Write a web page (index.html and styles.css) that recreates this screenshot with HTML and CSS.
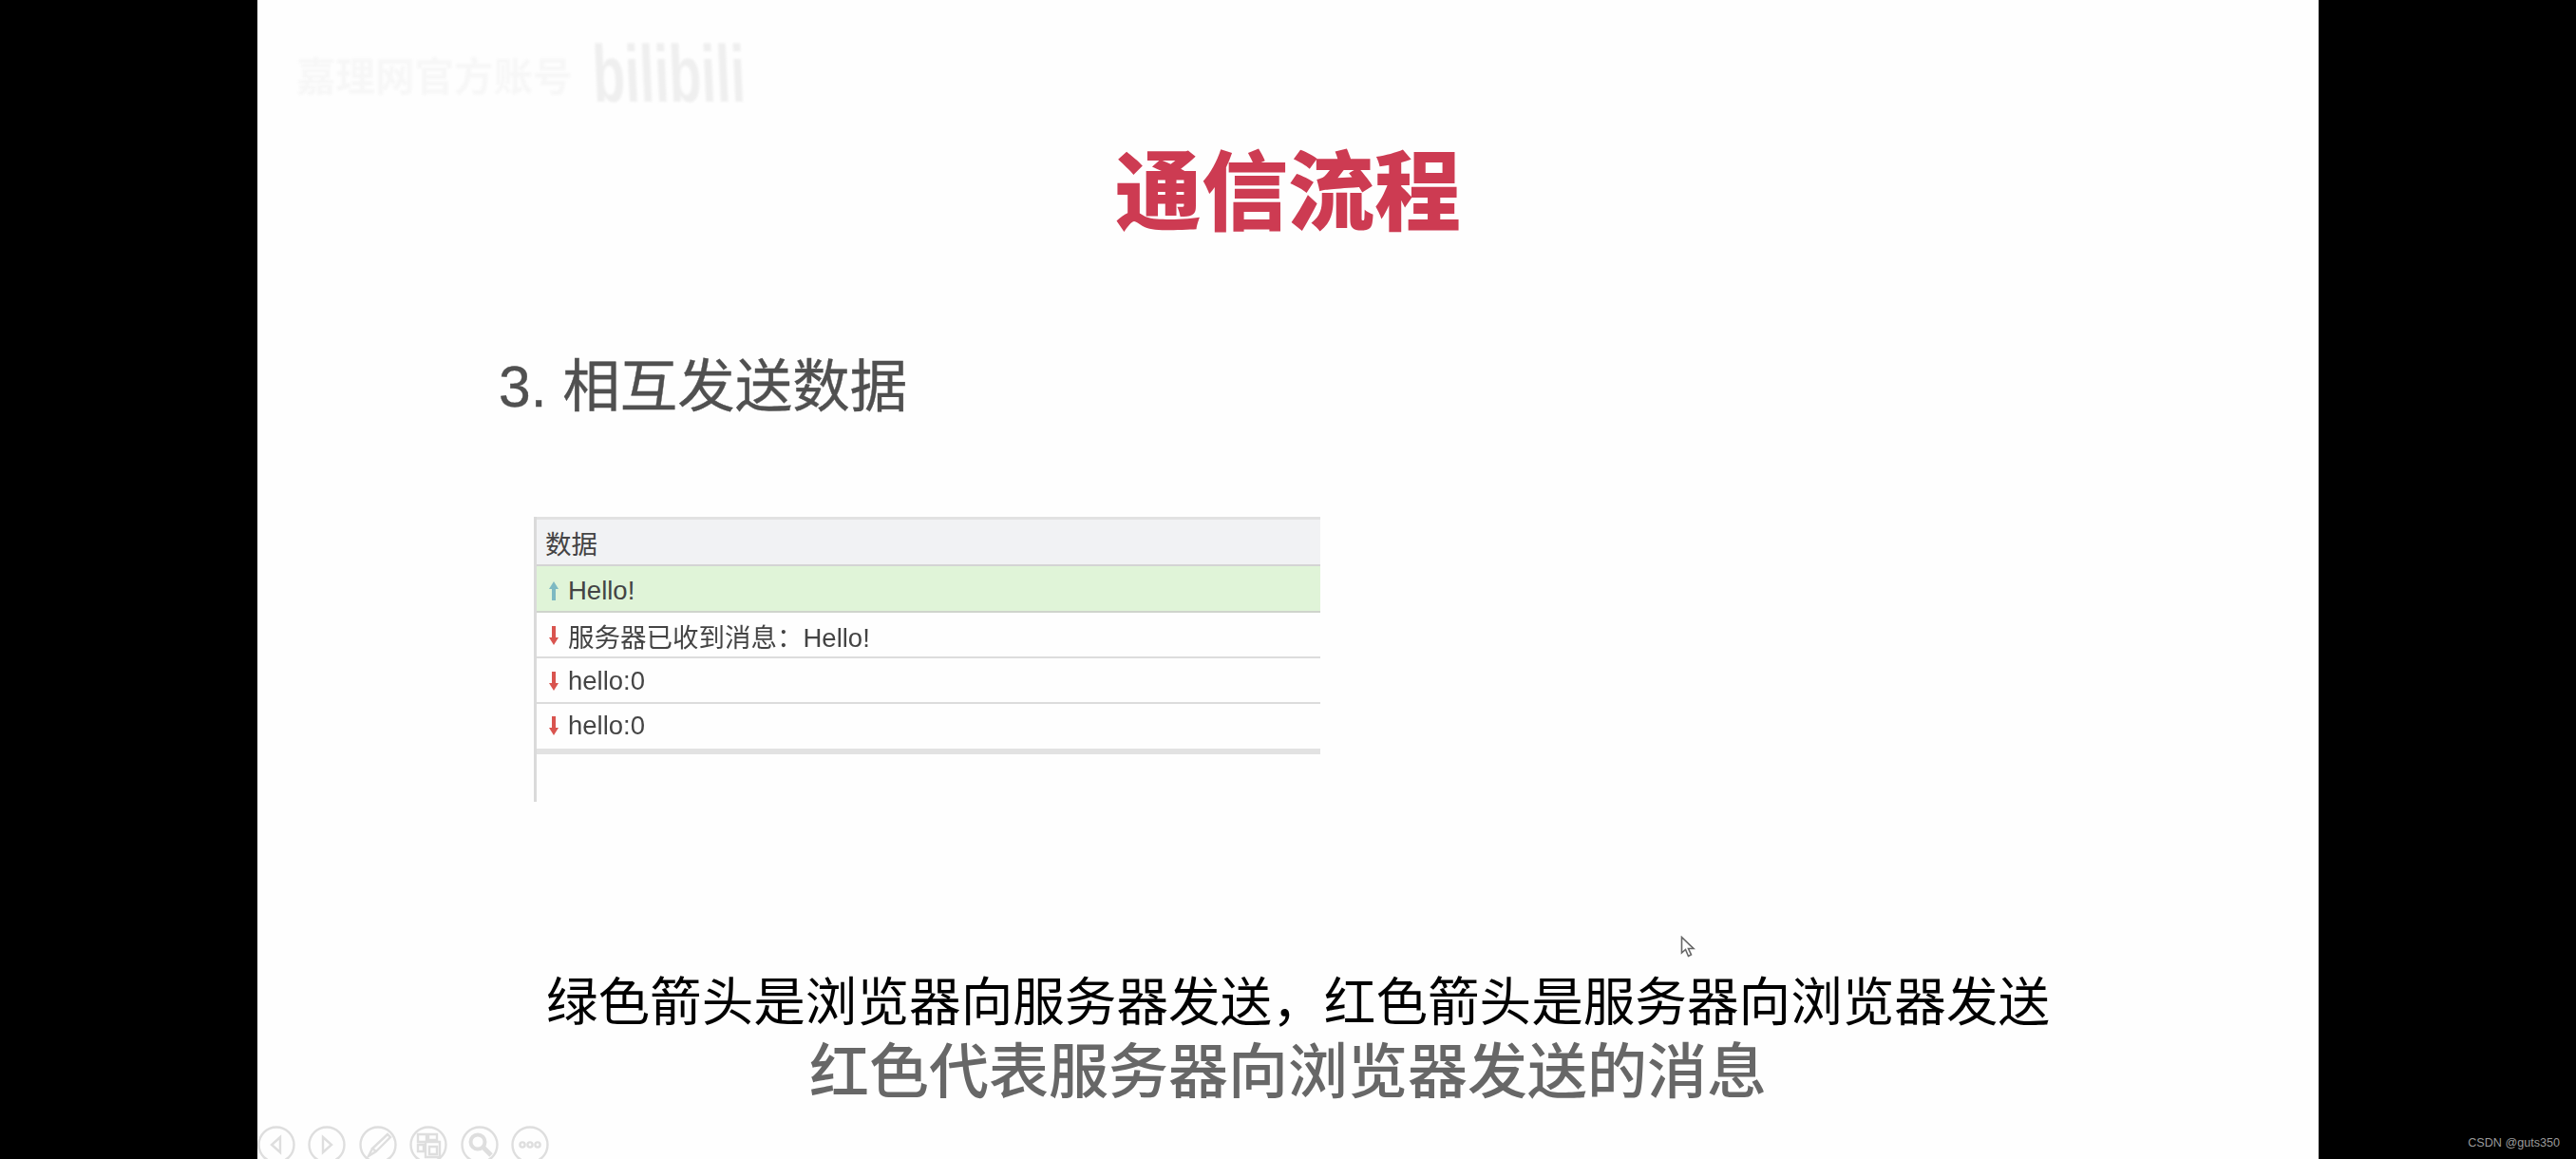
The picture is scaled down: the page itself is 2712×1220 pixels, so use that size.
FILE: index.html
```html
<!DOCTYPE html>
<html lang="zh-CN">
<head>
<meta charset="utf-8">
<title>通信流程</title>
<link rel="stylesheet" href="styles.css">
</head>
<body>
<main class="slide">
  <div class="watermark">
    <span class="wm-text">嘉理网官方账号</span>
    <span class="wm-logo">bilibili</span>
  </div>
  <h1 class="title">通信流程</h1>
  <h2 class="heading">3. 相互发送数据</h2>
  <section class="table">
    <div class="cell head">数据</div>
    <div class="cell sent">
      <svg class="arrow" viewBox="0 0 12 24"><path class="up" d="M6 2 11 10H8V22H4V10H1Z"/></svg>
      <span>Hello!</span>
    </div>
    <div class="cell">
      <svg class="arrow" viewBox="0 0 12 24"><path class="down" d="M6 22 11 14H8V2H4V14H1Z"/></svg>
      <span>服务器已收到消息&#xFF1A;Hello!</span>
    </div>
    <div class="cell">
      <svg class="arrow" viewBox="0 0 12 24"><path class="down" d="M6 22 11 14H8V2H4V14H1Z"/></svg>
      <span>hello:0</span>
    </div>
    <div class="cell last">
      <svg class="arrow" viewBox="0 0 12 24"><path class="down" d="M6 22 11 14H8V2H4V14H1Z"/></svg>
      <span>hello:0</span>
    </div>
  </section>
  <p class="caption-main">绿色箭头是浏览器向服务器发送&#xFF0C;红色箭头是服务器向浏览器发送</p>
  <p class="caption-sub">红色代表服务器向浏览器发送的消息</p>

  <svg class="cursor" viewBox="0 0 16 24"><path d="M1.5 1.5V18L5.5 14.5 8.5 21.5 11.5 20 8.5 13.5H14Z"/></svg>

  <div class="controls">
    <svg class="ctl" viewBox="0 0 40 40"><circle cx="20" cy="20" r="18.5"/><path d="M24 12 15 20 24 28Z"/></svg>
    <svg class="ctl" viewBox="0 0 40 40"><circle cx="20" cy="20" r="18.5"/><path d="M16 12 25 20 16 28Z"/></svg>
    <svg class="ctl" viewBox="0 0 40 40"><circle cx="20" cy="20" r="18.5"/><path d="M30 9 33 12 18 27 14 24ZM14 24 10 32 18 27"/></svg>
    <svg class="ctl" viewBox="0 0 40 40"><circle cx="20" cy="20" r="18.5"/><path d="M9 9H18V17H9ZM20 9H29V15H20ZM9 20H15V27H9ZM17 17H32V33H17ZM21 22H29V30H21Z"/></svg>
    <svg class="ctl" viewBox="0 0 40 40"><circle cx="20" cy="20" r="18.5"/><circle class="lens" cx="18" cy="17" r="7.5"/><path class="handle" d="M24 23 32 31"/></svg>
    <svg class="ctl" viewBox="0 0 40 40"><circle cx="20" cy="20" r="18.5"/><circle cx="12" cy="20" r="2.6"/><circle cx="20" cy="20" r="2.6"/><circle cx="28" cy="20" r="2.6"/></svg>
  </div>
</main>
<div class="credit">CSDN @guts350</div>
</body>
</html>
```
FILE: styles.css
```css
html, body {
  margin: 0;
  height: 100%;
}
body {
  background: #000;
  display: flex;
  justify-content: flex-start;
  overflow: hidden;
  font-family: "Noto Sans CJK SC", "Noto Sans", sans-serif;
}
.slide {
  position: relative;
  box-sizing: border-box;
  width: 2170px;
  height: 1220px;
  margin-left: 271px;
  padding-top: 135px;
  background: #fefefe;
  text-align: center;
}
.title {
  margin: 0;
  font-size: 91px;
  line-height: 120px;
  font-weight: 900;
  color: #cd3b52;
  filter: blur(0.6px);
}
.heading {
  margin: 112px 0 0 254px;
  font-family: "Liberation Sans", "Noto Sans CJK SC", sans-serif;
  font-size: 60.5px;
  line-height: 80px;
  font-weight: 400;
  color: #505050;
  text-align: left;
  -webkit-text-stroke: 0.4px #505050;
  filter: blur(0.6px);
}
.table {
  box-sizing: border-box;
  width: 828px;
  height: 300px;
  margin: 97px 0 0 291px;
  border-left: 3px solid #dadada;
  text-align: left;
  font-family: "Liberation Sans", "Noto Sans CJK SC", sans-serif;
  font-size: 27.5px;
  color: #444;
  filter: blur(0.6px);
}
.cell {
  box-sizing: border-box;
  height: 48px;
  display: flex;
  align-items: center;
  gap: 9px;
  padding: 2px 0 0 12px;
  border-bottom: 2px solid #dcdcdc;
}
.cell.head {
  height: 52px;
  padding: 0 0 0 9px;
  background: #f1f2f4;
  border-top: 3px solid #e2e2e2;
  border-bottom-color: #d4d4d4;
}
.cell.sent {
  height: 49px;
  padding-top: 4px;
  background: #e0f4d8;
  border-bottom-color: #cfd4cc;
}
.cell.last {
  height: 53px;
  padding-top: 0;
  padding-bottom: 2px;
  border-bottom: 6px solid #e2e2e2;
}
.arrow {
  width: 12px;
  height: 24px;
  flex: none;
}
.up { fill: #7db9c2; }
.down { fill: #d9544f; }
.caption-main {
  margin: 172px 0 0 21px;
  font-size: 54.6px;
  line-height: 70px;
  color: #000;
  white-space: nowrap;
  filter: blur(0.4px);
}
.caption-sub {
  margin: 0;
  font-size: 63px;
  line-height: 74px;
  font-weight: 500;
  color: #676767;
  white-space: nowrap;
  filter: blur(0.5px);
}
.watermark {
  position: absolute;
  left: 41px;
  top: 38px;
  display: flex;
  align-items: center;
  gap: 21px;
  height: 80px;
  filter: blur(0.8px);
}
.wm-text {
  font-size: 41.5px;
  line-height: 50px;
  font-weight: 700;
  color: #f7f7f7;
}
.wm-logo {
  font-family: "Liberation Sans", sans-serif;
  font-size: 85px;
  line-height: 80px;
  font-weight: 700;
  color: #efefef;
  transform-origin: left center;
  transform: scaleX(0.654) skewX(4deg);
}
.cursor {
  position: absolute;
  left: 1498px;
  top: 985px;
  width: 16px;
  height: 24px;
  fill: #fff;
  stroke: #666;
  stroke-width: 1.6;
  filter: blur(0.5px);
}
.controls {
  position: absolute;
  left: 0;
  bottom: -5px;
  display: flex;
  gap: 13.4px;
  filter: blur(0.5px);
}
.ctl {
  width: 40px;
  height: 40px;
  fill: none;
  stroke: #dedede;
  stroke-width: 2.4;
}
.ctl .lens { stroke-width: 4; }
.ctl .handle { stroke-width: 5; }
.credit {
  position: absolute;
  right: 17px;
  bottom: 9px;
  font-family: "Liberation Sans", sans-serif;
  font-size: 12.6px;
  line-height: 16px;
  color: #9a9a9a;
}
```
